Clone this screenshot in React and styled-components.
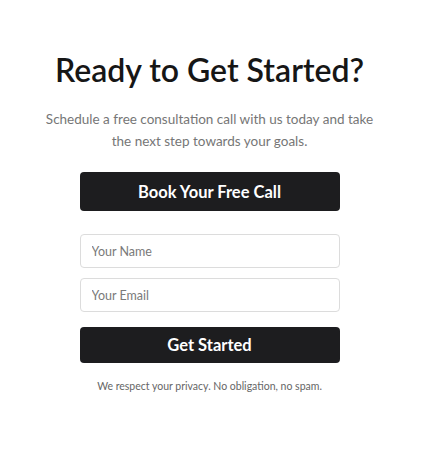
import React, { useState } from "react";
import styled, { createGlobalStyle } from "styled-components";

const GlobalStyle = createGlobalStyle`
  body {
    margin: 0;
    background: #ffffff;
    font-family: Lato, "Open Sans", sans-serif;
  }
`;

const Section = styled.section`
  width: 419px;
  padding-top: 50px;
  display: flex;
  flex-direction: column;
  align-items: center;
  text-align: center;
`;

const Title = styled.h1`
  margin: 0;
  font-size: 32px;
  font-weight: 600;
  color: #161616;
  line-height: 40px;
`;

const Lead = styled.p`
  margin: 18px 0 0;
  width: 340px;
  font-size: 13.5px;
  line-height: 22px;
  color: #767676;
`;

const Form = styled.form`
  width: 260px;
  margin-top: 20px;
  display: flex;
  flex-direction: column;
`;

const DarkButton = styled.button`
  height: ${(p) => p.$h}px;
  margin-top: ${(p) => p.$gap || 0}px;
  border: none;
  border-radius: 4px;
  background: #1d1d1f;
  color: #ffffff;
  font-family: Lato, sans-serif;
  font-size: 16.5px;
  font-weight: 700;
  cursor: pointer;
`;

const Field = styled.input`
  height: 34px;
  margin-top: ${(p) => p.$gap}px;
  box-sizing: border-box;
  padding: 0 11px;
  border: 1px solid #dcdcdc;
  border-radius: 4px;
  font-family: Lato, sans-serif;
  font-size: 12.5px;
  color: #222;
  outline: none;
  &::placeholder {
    color: #7a7a7a;
  }
`;

const Note = styled.p`
  margin: 17px 0 0;
  font-size: 10.5px;
  color: #666666;
`;

export default function App() {
  const [name, setName] = useState("");
  const [email, setEmail] = useState("");

  return (
    <>
      <GlobalStyle />
      <Section>
        <Title>Ready to Get Started?</Title>
        <Lead>
          Schedule a free consultation call with us today and take the next
          step towards your goals.
        </Lead>
        <Form onSubmit={(e) => e.preventDefault()}>
          <DarkButton type="button" $h={39}>
            Book Your Free Call
          </DarkButton>
          <Field
            $gap={23}
            placeholder="Your Name"
            value={name}
            onChange={(e) => setName(e.target.value)}
          />
          <Field
            $gap={10}
            placeholder="Your Email"
            value={email}
            onChange={(e) => setEmail(e.target.value)}
          />
          <DarkButton type="submit" $h={36} $gap={15}>
            Get Started
          </DarkButton>
        </Form>
        <Note>We respect your privacy. No obligation, no spam.</Note>
      </Section>
    </>
  );
}
